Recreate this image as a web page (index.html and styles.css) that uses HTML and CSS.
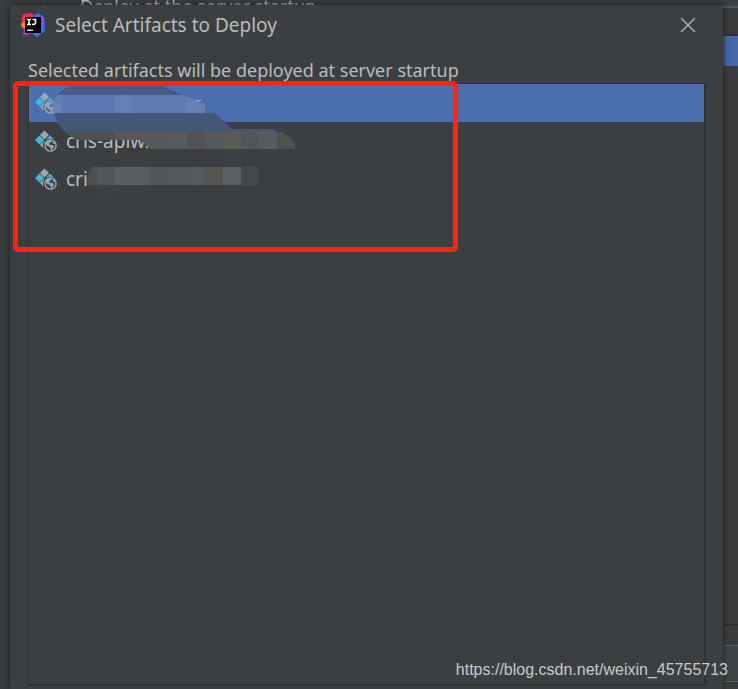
FILE: index.html
```
<!DOCTYPE html>
<html lang="en">

<head>
    <meta charset="utf-8">
    <title>Select Artifacts to Deploy</title>
    <link rel="stylesheet" href="styles.css">
</head>

<body>
    <!-- icon shared by the list rows -->
    <svg class="defs" aria-hidden="true">
        <symbol id="artifact" viewBox="0 0 22 22">
            <path fill="#9aa7b0" d="M9.500 0.500l4.500 4.500-4.500 4.500L5 5z" />
            <path fill="#40b6e0" d="M4.500 5.500L9 10l-4.500 4.500L0 10z" />
            <path fill="#40b6e0" d="M15 5.500l4 4c-3-1-6-1-8.500 0.500z" />
            <path fill="#9aa7b0" d="M9 10.500l0.500 0.500c-1.500 2-2 5-1 7.500L5 15z" />
            <circle cx="15.500" cy="15.500" r="5.600" fill="none" stroke="#9aa7b0" stroke-width="1.400" />
            <path fill="#9aa7b0" d="M10.500 13c1-2 3-3 5.500-3l1 2-3 1 1 2 3 0 1 2-3 3.500-1-3.500-3-1zM18 11l2 3-2 0z" />
        </symbol>
    </svg>

    <!-- window behind the dialog -->
    <div class="behind">
        <p class="behind-title">Deploy at the server startup</p>
        <div class="behind-side">
            <div class="side-head"></div>
            <div class="side-selected"></div>
            <div class="side-body"></div>
            <div class="side-gap"></div>
            <div class="side-field"></div>
            <div class="side-foot"></div>
        </div>
    </div>

    <main class="dialog">
        <header class="titlebar">
            <svg class="logo" viewBox="0 0 24 24" aria-hidden="true">
                <path fill="#fc801d" d="M1 9l5-2v12L4 17 0 13z" />
                <path fill="#fe2857" d="M2 1l9-1 3 4v5H5L0 7z" />
                <path fill="#9d3fd0" d="M3 15l9 5-7 2-3 1z" />
                <path fill="#3b6cf5" d="M12 3l5-3 6 4 1 14-8 6-6-4z" />
                <path fill="#7652d6" d="M19 2l4 2 1 9-5-3z" />
                <path d="M4 4h16v16H4z" />
                <path fill="none" stroke="#fff" stroke-width="1.600" d="M6 6.500h4M8 6.500v5M6 11.500h4M11.500 6.500h3v3.500q0 1.500-3.500 1.500" />
                <path fill="#ddd" d="M6 16.500h6v1.500H6z" />
            </svg>
            <h1>Select Artifacts to Deploy</h1>
            <button class="close" type="button" aria-label="Close">
                <svg viewBox="0 0 16 16"><path d="M1 1l14 14M15 1L1 15" /></svg>
            </button>
        </header>

        <p class="hint" id="hint">Selected artifacts will be deployed at server startup</p>

        <div class="list">
            <ul aria-labelledby="hint">
                <li class="row selected"><svg class="icon"><use href="#artifact" /></svg></li>
                <li class="row"><svg class="icon"><use href="#artifact" /></svg>cris-apiw.</li>
                <li class="row"><svg class="icon"><use href="#artifact" /></svg>cri</li>
            </ul>

            <!-- blurred-out names -->
            <svg class="smudge" viewBox="29 84 280 130" aria-hidden="true">
                <clipPath id="blob">
                    <path d="M82 84Q54 88 53 106Q56 132 78 140H140L150 149H295V144Q288 132 275 131V129H232L215 113H205V104L183 95L158 84z" />
                </clipPath>
                <clipPath id="tail">
                    <path d="M92 167H259V185H87Q87 172 92 167z" />
                </clipPath>
                <g clip-path="url(#blob)">
                    <path fill="#465c86" d="M50 84h250v11H50z" />
                    <path fill="#6681b8" d="M50 95h12v18H50z" />
                    <path fill="#5c78b0" d="M62 95h53v18H62z" />
                    <path fill="#637fb6" d="M115 95h18v18h-18z" />
                    <path fill="#5f7bb2" d="M133 95h54v18h-54z" />
                    <path fill="#6580b8" d="M187 95h18v18h-18z" />
                    <path fill="#445778" d="M50 113h250v18H50z" />
                    <path fill="#4d5154" d="M50 131h65v18H50z" />
                    <path fill="#575858" d="M115 131h54v18h-54z" />
                    <path fill="#555a5d" d="M169 131h18v18h-18z" />
                    <path fill="#535354" d="M187 131h18v18h-18z" />
                    <path fill="#54595b" d="M205 131h18v18h-18z" />
                    <path fill="#595b57" d="M223 131h18v18h-18z" />
                    <path fill="#515658" d="M241 131h18v18h-18z" />
                    <path fill="#575b5e" d="M259 131h18v18h-18z" />
                    <path fill="#50514e" d="M277 131h18v18h-18z" />
                </g>
                <g clip-path="url(#tail)">
                    <path fill="#4d4f50" d="M86 167h11v18H86z" />
                    <path fill="#535556" d="M97 167h18v18H97z" />
                    <path fill="#5a5c5d" d="M115 167h36v18h-36z" />
                    <path fill="#535557" d="M151 167h18v18h-18z" />
                    <path fill="#58585a" d="M169 167h18v18h-18z" />
                    <path fill="#565a5e" d="M187 167h18v18h-18z" />
                    <path fill="#555653" d="M205 167h18v18h-18z" />
                    <path fill="#5e5f61" d="M223 167h18v18h-18z" />
                    <path fill="#444747" d="M241 167h18v18h-18z" />
                </g>
                <path fill="#3e4143" d="M223 149h18v18h-18zM97 185h18v18H97z" />
                <path fill="#a9b0ba" d="M196 100h5v1h-5z" />
            </svg>
            <div class="marker"></div>
        </div>
    </main>

    <div class="watermark">https://blog.csdn.net/weixin_45755713</div>
</body>

</html>
```

FILE: styles.css
```
* {
    margin: 0;
    padding: 0;
    box-sizing: border-box;
}

body {
    position: relative;
    height: 100vh;
    overflow: hidden;
    padding: 5px 15px 0 10px;
    background-color: #3a3c3e;
    color: #bbbbbb;
    font-family: "Noto Sans", "Open Sans", sans-serif;
    font-size: 18px;
}

.defs {
    position: absolute;
    width: 0;
    height: 0;
}

/* window behind */
.behind {
    position: absolute;
    inset: 0;
}

.behind-title {
    margin-left: 47px;
    padding-left: 32px;
    height: 5px;
    border-left: 1px solid #2f3133;
    line-height: 12px;
}

.behind-side {
    position: absolute;
    top: 0;
    right: 0;
    bottom: 0;
    width: 15px;
    display: flex;
    flex-direction: column;
}

.side-head {
    height: 36px;
    border-bottom: 2px solid #2f3032;
    background: linear-gradient(#3c3f41 6px, #555657 6px, #555657 8px, #3a3c3e 8px);
}

.side-selected {
    height: 30px;
    background-color: #4668a6;
}

.side-body {
    flex: 1;
    border-bottom: 2px solid #2d2e30;
}

.side-gap {
    height: 19px;
}

.side-field {
    height: 37px;
    border-top: 1px solid #5e6060;
    border-bottom: 1px solid #5e6060;
    background-color: #404446;
}

.side-foot {
    height: 7px;
}

/* dialog */
.dialog {
    position: relative;
    height: 100%;
    display: flex;
    flex-direction: column;
    padding: 0 17px 3px 18px;
    background-color: #3c3f41;
    box-shadow: 0 0 6px #1c1d1e;
}

.titlebar {
    display: flex;
    align-items: center;
    height: 40px;
    margin-right: 2px;
    margin-left: -7px;
}

.logo {
    width: 24px;
    height: 24px;
    margin-right: 10px;
}

h1 {
    flex: 1;
    font-size: 19px;
    font-weight: normal;
}

.close {
    width: 32px;
    height: 32px;
    border: 0;
    background: none;
}

.close svg {
    display: block;
    width: 16px;
    height: 16px;
    margin: auto;
    fill: none;
    stroke: #b4b6b7;
    stroke-width: 1.4;
}

.hint {
    margin-top: 12px;
    height: 26px;
    line-height: 26px;
}

.list {
    position: relative;
    flex: 1;
    border: 1px solid #323232;
    border-right-width: 2px;
    border-bottom-width: 2px;
}

ul {
    list-style: none;
}

.row {
    display: flex;
    align-items: center;
    height: 38px;
    padding-left: 6px;
    font-size: 19px;
}

.selected {
    background-color: #4b6eaf;
}

.icon {
    width: 22px;
    height: 22px;
    margin-right: 9px;
}

.smudge {
    position: absolute;
    top: 0;
    left: 0;
    width: 280px;
    height: 130px;
}

.marker {
    position: absolute;
    top: -3px;
    left: -16px;
    width: 445px;
    height: 171px;
    border: 5px solid #ff2312;
    border-radius: 5px;
}

.watermark {
    position: absolute;
    right: 10px;
    bottom: 9px;
    color: #c9cacb;
    font: 16px/20px "Liberation Sans", Arial, sans-serif;
}
```
